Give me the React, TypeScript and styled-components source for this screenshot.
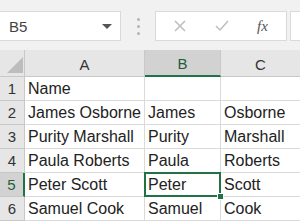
import React from 'react';
import styled, { createGlobalStyle } from 'styled-components';

const GlobalStyle = createGlobalStyle`
  html, body {
    margin: 0;
    padding: 0;
    background: #ffffff;
    font-family: 'Liberation Sans', Arial, sans-serif;
  }
`;

const Sheet = styled.div`
  width: 300px;
  height: 224px;
  overflow: hidden;
  display: flex;
  flex-direction: column;
  background: #fff;
`;

const FormulaBar = styled.div`
  height: 50px;
  box-sizing: border-box;
  padding-top: 11px;
  background: #f1f1f1;
  display: flex;
  align-items: flex-start;
`;

const NameBox = styled.div`
  width: 121px;
  height: 30px;
  box-sizing: border-box;
  background: #fff;
  border: 1px solid #dadada;
  border-left: none;
  display: flex;
  align-items: center;
  justify-content: space-between;
  padding: 0 8px 0 9px;
  font-size: 15px;
  color: #444;
`;

const Caret = styled.span`
  width: 0;
  height: 0;
  border-left: 5px solid transparent;
  border-right: 5px solid transparent;
  border-top: 5px solid #555;
`;

const Grip = styled.div`
  width: 34px;
  height: 30px;
  display: flex;
  flex-direction: column;
  align-items: center;
  justify-content: center;
  gap: 4px;
  span {
    width: 3px;
    height: 3px;
    border-radius: 50%;
    background: #b5b5b5;
  }
`;

const FormulaBox = styled.div`
  width: 132px;
  height: 30px;
  box-sizing: border-box;
  background: #fff;
  border: 1px solid #dadada;
  display: flex;
  align-items: center;
  justify-content: space-around;
  padding: 0 4px;
`;

const InputBox = styled.div`
  margin-left: 3px;
  flex: 1;
  height: 30px;
  box-sizing: border-box;
  background: #fff;
  border: 1px solid #dadada;
  border-right: none;
`;

const Fx = styled.span`
  font-family: 'Liberation Serif', 'Times New Roman', serif;
  font-style: italic;
  font-size: 15px;
  color: #555;
`;

const Grid = styled.div`
  display: grid;
  grid-template-columns: 25px 120px 76px 80px;
  grid-template-rows: 27px repeat(6, 24px);
`;

const Corner = styled.div`
  position: relative;
  background: #e6e6e6;
  border-right: 1px solid #c8c8c8;
  border-bottom: 1px solid #c8c8c8;
  box-sizing: border-box;
  &::after {
    content: '';
    position: absolute;
    right: 1px;
    bottom: 3px;
    width: 0;
    height: 0;
    border-left: 16px solid transparent;
    border-bottom: 16px solid #bdbdbd;
  }
`;

const ColHead = styled.div<{ $active?: boolean }>`
  box-sizing: border-box;
  background: ${(p) => (p.$active ? '#d2d2d2' : '#e6e6e6')};
  border-right: 1px solid #c8c8c8;
  border-bottom: ${(p) => (p.$active ? '2px solid #217346' : '1px solid #c8c8c8')};
  display: flex;
  align-items: center;
  justify-content: center;
  padding-top: 2px;
  font-size: 15px;
  color: ${(p) => (p.$active ? '#1e5e38' : '#333')};
`;

const RowHead = styled.div<{ $active?: boolean }>`
  box-sizing: border-box;
  background: ${(p) => (p.$active ? '#d2d2d2' : '#e6e6e6')};
  border-bottom: 1px solid #c8c8c8;
  border-right: ${(p) => (p.$active ? '2px solid #217346' : '1px solid #c8c8c8')};
  display: flex;
  align-items: center;
  justify-content: center;
  font-size: 15px;
  color: ${(p) => (p.$active ? '#1e5e38' : '#333')};
`;

const Cell = styled.div<{ $selected?: boolean }>`
  position: relative;
  box-sizing: border-box;
  border-right: 1px solid #dadada;
  border-bottom: 1px solid #dadada;
  display: flex;
  align-items: center;
  padding-left: 3px;
  font-size: 16px;
  color: #222;
  white-space: nowrap;
  overflow: hidden;
  ${(p) =>
    p.$selected &&
    `
    overflow: visible;
    z-index: 1;
    &::before {
      content: '';
      position: absolute;
      left: -1px;
      top: -1px;
      right: -1px;
      bottom: -1px;
      border: 2px solid #217346;
    }
    &::after {
      content: '';
      position: absolute;
      right: -4px;
      bottom: -4px;
      width: 5px;
      height: 5px;
      background: #217346;
      border: 1px solid #fff;
    }
  `}
`;

const rows = [
  ['Name', '', ''],
  ['James Osborne', 'James', 'Osborne'],
  ['Purity Marshall', 'Purity', 'Marshall'],
  ['Paula Roberts', 'Paula', 'Roberts'],
  ['Peter Scott', 'Peter', 'Scott'],
  ['Samuel Cook', 'Samuel', 'Cook'],
];

export default function App() {
  return (
    <Sheet>
      <GlobalStyle />
      <FormulaBar>
        <NameBox>
          B5
          <Caret />
        </NameBox>
        <Grip>
          <span />
          <span />
          <span />
        </Grip>
        <FormulaBox>
          <svg width="12" height="12" viewBox="0 0 12 12">
            <path d="M1 1 L11 11 M11 1 L1 11" stroke="#bdbdbd" strokeWidth="1.5" />
          </svg>
          <svg width="14" height="12" viewBox="0 0 14 12">
            <path d="M1 6 L5 10 L13 1" stroke="#bdbdbd" strokeWidth="1.5" fill="none" />
          </svg>
          <Fx>fx</Fx>
        </FormulaBox>
        <InputBox />
      </FormulaBar>
      <Grid>
        <Corner />
        <ColHead>A</ColHead>
        <ColHead $active>B</ColHead>
        <ColHead>C</ColHead>
        {rows.map((r, i) => (
          <React.Fragment key={i}>
            <RowHead $active={i === 4}>{i + 1}</RowHead>
            <Cell>{r[0]}</Cell>
            <Cell $selected={i === 4}>{r[1]}</Cell>
            <Cell>{r[2]}</Cell>
          </React.Fragment>
        ))}
      </Grid>
    </Sheet>
  );
}
